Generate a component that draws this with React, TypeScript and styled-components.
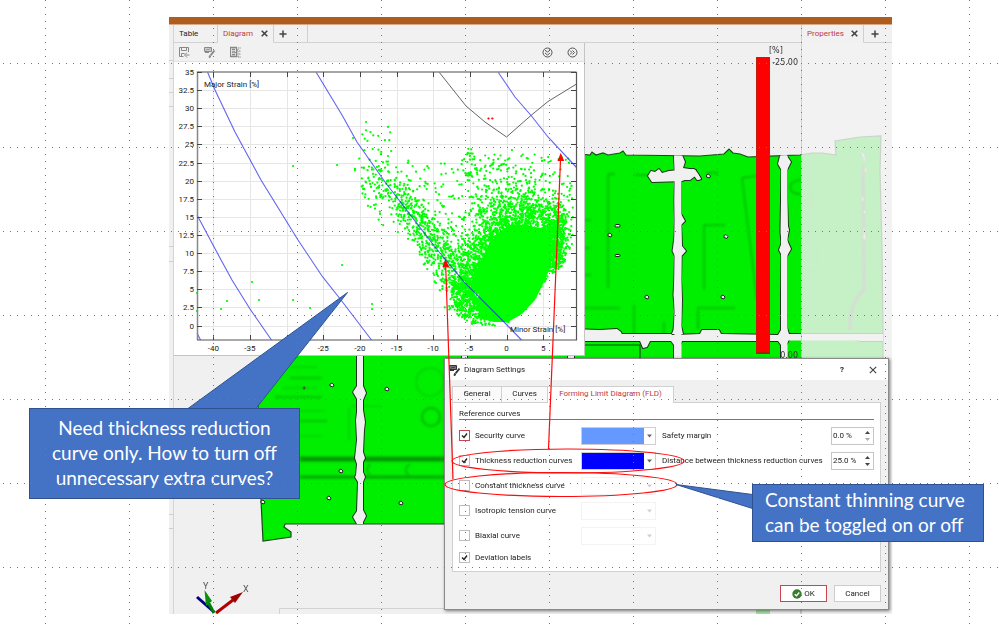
import React from "react";
import styled, { createGlobalStyle, css } from "styled-components";

const Global = createGlobalStyle`
  * { box-sizing: border-box; }
  body { margin: 0; background: #fff; }
  button, input, select { font: inherit; color: inherit; margin: 0; }
`;

const ui = `Roboto, "Open Sans", sans-serif`;

/* ---------- page ---------- */

const Slide = styled.main`
  position: relative;
  display: flex;
  min-height: 100vh;
  padding: 17px 107px 13px 169px;
  background: #fff;
  overflow: hidden;
  font-family: ${ui};
  font-size: 8px;
  color: #1c1c1c;
`;

const DotGrid = styled.div`
  position: absolute;
  inset: 0;
  z-index: 5;
  pointer-events: none;
  background-image: radial-gradient(circle at 45.5px 0.5px, #777 0 0.6px, transparent 0.9px),
    radial-gradient(circle at 3.5px 63.5px, #777 0 0.6px, transparent 0.9px);
  background-size: 84px 7px, 7px 84px;
`;

const AppWindow = styled.section`
  position: relative;
  flex: 1;
  display: flex;
  flex-direction: column;
  background: #f0f0f0;
`;

const TitleStrip = styled.header`
  height: 8px;
  background: #ae5d1e;
  border-bottom: 1px solid #dba987;
`;

const Body = styled.div`
  position: relative;
  flex: 1;
  display: flex;
`;

const SceneSvg = styled.svg`
  position: absolute;
  inset: 0;
  width: 100%;
  height: 100%;
`;

const Rail = styled.aside`
  position: relative;
  width: 5px;
  border-right: 1px solid #d4d4d4;
`;

const Workspace = styled.div`
  position: relative;
  flex: 1;
  display: flex;
  flex-direction: column;
  align-items: flex-start;
`;

const PropertiesDock = styled.aside`
  position: relative;
  width: 91px;
  background: rgba(242, 242, 242, 0.82);
  border-left: 1px solid #cfcfcf;
`;

const TabStrip = styled.nav`
  display: flex;
  align-self: stretch;
  height: 18px;
  background: #f1f1f1;
`;

const TabFill = styled.div`
  display: flex;
  flex: 1;
  padding-left: 7px;
  border-bottom: 1px solid #d2d2d2;
`;

const DockTab = styled.div<{ $active?: boolean; $w: number }>`
  display: flex;
  align-items: center;
  justify-content: space-between;
  width: ${(p) => p.$w}px;
  padding: 0 5px;
  border-right: 1px solid #cfcfcf;
  border-bottom: 1px solid ${(p) => (p.$active ? "transparent" : "#d2d2d2")};
  color: ${(p) => (p.$active ? "#c0393f" : "#1c1c1c")};
`;

const PlainButton = styled.button`
  display: flex;
  align-items: center;
  justify-content: center;
  padding: 0;
  border: 0;
  background: none;
  line-height: 12px;
`;

const DiagramPanel = styled.section`
  display: flex;
  flex-direction: column;
  width: 411px;
  background: #fff;
  border-right: 1px solid #c4c4c4;
  border-bottom: 1px solid #c4c4c4;
`;

const Toolbar = styled.div`
  display: flex;
  align-items: center;
  gap: 14px;
  height: 19px;
  padding: 0 6px 0 4px;
  background: #f1f1f1;
  border-bottom: 1px solid #e2e2e2;
`;

const Spring = styled.span`
  flex: 1;
`;

const Plot = styled.svg`
  display: block;
  width: 410px;
  height: 293px;
`;

const Legend = styled.div`
  position: absolute;
  top: 20px;
  right: 2px;
  display: grid;
  grid-template-columns: 14px 28px;
  column-gap: 1px;
  font-family: "DejaVu Sans", sans-serif;
  font-size: 8px;
  line-height: 12px;
  color: #333;
`;

const LegendUnit = styled.span`
  grid-column: 1 / 3;
  padding-left: 13px;
`;

const LegendBar = styled.div`
  height: 297px;
  background: #f00;
  border: 1px solid #c02010;
  border-bottom: 2px solid #a02000;
`;

const LegendScale = styled.div`
  display: flex;
  flex-direction: column;
  justify-content: space-between;
  align-items: flex-end;
  height: 305px;
  margin-right: 1px;
`;

/* ---------- dialog ---------- */

const Dialog = styled.section`
  position: absolute;
  right: 3px;
  bottom: 4px;
  z-index: 2;
  width: 445px;
  background: #f0f0f0;
  border: 1px solid #8a8a8a;
  box-shadow: 1px 1px 3px rgba(0, 0, 0, 0.5);
`;

const DialogTitle = styled.header`
  display: flex;
  align-items: center;
  gap: 3px;
  height: 21px;
  padding: 0 11px 0 4px;
  background: #fff;
`;

const DialogHeading = styled.h1`
  flex: 1;
  margin: 0;
  font-size: 8px;
  font-weight: 400;
`;

const TitleActions = styled.div`
  display: flex;
  gap: 25px;
`;

const DialogTabs = styled.div`
  display: flex;
  align-items: flex-end;
  height: 22px;
  padding: 0 7px;
`;

const DialogTab = styled.button<{ $active?: boolean; $w: number }>`
  width: ${(p) => p.$w}px;
  height: ${(p) => (p.$active ? 17 : 16)}px;
  padding: 0 0 2px;
  line-height: 12px;
  white-space: nowrap;
  border: 1px solid #d0d0d0;
  border-bottom: 0;
  border-right-width: ${(p) => (p.$active ? 1 : 0)}px;
  background: ${(p) => (p.$active ? "#fff" : "#fafafa")};
  color: ${(p) => (p.$active ? "#c0393f" : "#1c1c1c")};
  ${(p) =>
    p.$active &&
    css`
      position: relative;
      z-index: 1;
      margin-bottom: -1px;
    `}
`;

const TabPage = styled.div`
  height: 170px;
  margin: 0 7px;
  padding: 5px 6px 0;
  background: #fff;
  border: 1px solid #d0d0d0;
`;

const GroupTitle = styled.h2`
  margin: 0 0 3px;
  font-size: 8px;
  font-weight: 400;
  line-height: 11px;
  border-bottom: 1px solid #777;
`;

const CurveRow = styled.div<{ $short?: boolean }>`
  display: grid;
  grid-template-columns: 122px 75px 1fr 43px;
  align-items: center;
  height: ${(p) => (p.$short ? 19 : 25)}px;
`;

const CheckLabel = styled.label`
  display: flex;
  align-items: center;
  gap: 5px;
  white-space: nowrap;
`;

const CheckBox = styled.input<{ $accent?: boolean }>`
  appearance: none;
  flex: none;
  width: 11px;
  height: 11px;
  border: 1px solid ${(p) => (p.$accent ? "#c9474c" : "#bdbdbd")};
  background: #fff;
  &:checked {
    background-image: url("data:image/svg+xml,%3Csvg xmlns='http://www.w3.org/2000/svg' viewBox='0 0 9 9'%3E%3Cpath d='M2 4.5 4 6.5 7 2.5' fill='none' stroke='%23222' stroke-width='1.4'/%3E%3C/svg%3E");
  }
`;

const ColorSelect = styled.select<{ $color?: string }>`
  appearance: none;
  width: 75px;
  height: 18px;
  padding: 0;
  border: 1px solid ${(p) => (p.$color ? "#cfcfcf" : "#eeeeee")};
  color: transparent;
  background-color: #fff;
  background-image: url("data:image/svg+xml,%3Csvg xmlns='http://www.w3.org/2000/svg' viewBox='0 0 5 4'%3E%3Cpath d='M0 .5h5L2.500 3.500z' fill='%23${(p) =>
        p.$color ? "666" : "bbb"}'/%3E%3C/svg%3E"),
    linear-gradient(${(p) => p.$color || "#fff"}, ${(p) => p.$color || "#fff"});
  background-size: 5px 4px, 62px 100%;
  background-position: 65px 6px, 0 0;
  background-repeat: no-repeat;
`;

const FieldLabel = styled.label`
  padding-left: 6px;
  white-space: nowrap;
`;

const SpinBox = styled.span`
  display: flex;
  height: 18px;
  border: 1px solid #c6c6c6;
  background: #fff;
`;

const SpinInput = styled.input`
  flex: 1;
  min-width: 0;
  padding: 0 0 0 1px;
  border: 0;
  background: none;
`;

const SpinButtons = styled.span`
  display: flex;
  flex-direction: column;
  justify-content: center;
  gap: 4px;
  width: 11px;
`;

const DialogFooter = styled.footer`
  display: flex;
  justify-content: flex-end;
  gap: 7px;
  padding: 13px 7px 7px;
`;

const DialogButton = styled.button<{ $primary?: boolean }>`
  display: flex;
  align-items: center;
  justify-content: center;
  gap: 2px;
  width: 47px;
  height: 17px;
  padding: 0;
  background: #fff;
  border: 1px solid ${(p) => (p.$primary ? "#c9474c" : "#cccccc")};
`;

/* ---------- annotations ---------- */

const Annotations = styled.svg`
  position: absolute;
  top: 0;
  left: 0;
  z-index: 3;
  width: 999px;
  height: 627px;
  pointer-events: none;
`;

const Callout = styled.p<{ $x: number; $y: number; $w: number; $left?: boolean }>`
  position: absolute;
  z-index: 4;
  left: ${(p) => p.$x}px;
  top: ${(p) => p.$y}px;
  width: ${(p) => p.$w}px;
  margin: 0;
  padding: ${(p) => (p.$left ? "2px 0 4px 12px" : "6px 0 8px")};
  text-align: ${(p) => (p.$left ? "left" : "center")};
  font-family: Lato, sans-serif;
  font-size: 19px;
  line-height: 25px;
  color: #fff;
  background: #4472c4;
  border: 1px solid #2f528f;
`;

/* ---------- strain plot data ---------- */

function makeRandom(seed: number) {
  let s = seed;
  return () => {
    s = (s * 1664525 + 1013904223) % 4294967296;
    return s / 4294967296;
  };
}

type Pt = [number, number];

function interpolate(line: Pt[], x: number) {
  if (x <= line[0][0]) return line[0][1];
  for (let i = 1; i < line.length; i++) {
    const [x0, y0] = line[i - 1];
    const [x1, y1] = line[i];
    if (x <= x1) return y0 + ((x - x0) / (x1 - x0)) * (y1 - y0);
  }
  return line[line.length - 1][1];
}

const lowerEdge: Pt[] = [
  [350, 160], [372, 220], [400, 235], [430, 275], [445, 310], [470, 324], [495, 326], [508, 323],
  [520, 316], [535, 301], [543, 289], [548, 279], [555, 271], [563, 268], [567, 254], [574, 240],
];
const mainCurve: Pt[] = [
  [316, 72], [342, 115], [357, 142], [385, 182], [435, 247], [465, 283], [505, 323], [522, 340],
];

function makeScatter() {
  const rnd = makeRandom(77);
  const gauss = () => rnd() + rnd() + rnd() + rnd() - 2;
  const pts: Pt[] = [];
  const add = (x: number, y: number) => {
    if (x < 574 && x > 350 && y > 118 && y < interpolate(lowerEdge, x)) pts.push([x, y]);
  };
  for (let i = 0; i < 950; i++) {
    const x = 382 + 108 * Math.pow(rnd(), 0.7);
    add(x + gauss() * 10, interpolate(mainCurve, x) + gauss() * (18 + (x - 368) * 0.1));
  }
  for (let i = 0; i < 70; i++) add(372 + gauss() * 13, 185 + gauss() * 30);
  for (let i = 0; i < 500; i++) add(470 + gauss() * 16, 292 + gauss() * 26);
  for (let i = 0; i < 2300; i++) add(522 + gauss() * 40, 240 + gauss() * 42);
  for (let i = 0; i < 1300; i++) add(495 + gauss() * 27, 274 + gauss() * 42);
  for (let i = 0; i < 450; i++) add(556 + gauss() * 9, 240 + gauss() * 30);
  for (let i = 0; i < 360; i++) {
    const x = 395 + 179 * rnd();
    const y = 285 - 128 * Math.pow(rnd(), 0.8);
    if (y < interpolate(mainCurve, x) + 10) add(x, y);
  }
  for (let i = 0; i < 50; i++) add(468 + 75 * rnd(), 148 + 55 * rnd());
  for (let i = 0; i < 24; i++) add(470 + gauss() * 8, 148 + 30 * rnd());
  for (let i = 0; i < 22; i++) add(354 + 40 * rnd(), 122 + 50 * rnd());
  const lone: Pt[] = [
    [293, 166], [337, 165], [197, 293], [197, 311], [221, 309], [227, 301], [252, 282], [259, 300],
    [293, 300], [310, 308], [342, 265], [372, 304], [372, 309], [366, 122], [353, 138],
  ];
  return [...pts, ...lone].map(([x, y]) => `M${x.toFixed(1)} ${y.toFixed(1)}h.1`).join("");
}

const scatterPath = makeScatter();

const yTicks = [35, 32.5, 30, 27.5, 25, 22.5, 20, 17.5, 15, 12.5, 10, 7.5, 5, 2.5, 0];
const xTicks = [-40, -35, -30, -25, -20, -15, -10, -5, 0, 5];
const px = (v: number) => 506.5 + v * 7.33;
const py = (v: number) => 325.5 - v * 7.243;

const reductionCurves = [
  "M207.500 72 215 90 235 132 261 180 298 240 322 276 341 300 371.500 340",
  "M197 215 220 258 232 280 250 309 271.500 340",
  "M197 333 200.500 340",
  "M316 72 342 115 357 142 385 182 435 247 465 283 505 323 521.500 340",
  "M498 72 515 97 531.500 116 548 137 576.500 167.500",
];

function StrainPlot() {
  return (
    <Plot viewBox="174 62 410 293" role="img" aria-label="Forming limit diagram">
      <rect x="197.500" y="72.500" width="379" height="267" fill="#fff" />
      <g stroke="#e6e6e6">
        {yTicks.slice(1).map((v) => (
          <path key={v} d={`M198 ${Math.round(py(v)) + 0.5}H576`} />
        ))}
        {xTicks.map((v) => (
          <path key={v} d={`M${Math.round(px(v)) + 0.5} 73V340`} />
        ))}
      </g>
      <path d="M439 72 466 106 485 122 506.500 137 531.500 115 548 101.500 576.500 84" fill="none" stroke="#666" />
      <path d={scatterPath} stroke="#00ff00" strokeWidth="2.200" strokeLinecap="round" fill="none" />
      <path
        d="M477 318 482 302 474 284 479 264 487 248 498 233 512 224 530 226 545 229 551 245 551 266 544 282 535 300 522 314 508 322 494 322Z"
        fill="#00ff00"
      />
      <path d="M488.500 118.500h.1M492.300 118.500h.1" stroke="#f00" strokeWidth="2.200" strokeLinecap="round" />
      <g fill="none" stroke="#2222f0" strokeWidth="1.100" strokeOpacity="0.700">
        {reductionCurves.map((d) => (
          <path key={d} d={d} />
        ))}
      </g>
      <path d="M197.500 340V72H576.500" fill="none" stroke="#888" strokeWidth="1.500" />
      <path d="M197 340H576.500V72" fill="none" stroke="#555" strokeWidth="1.200" />
      <g stroke="#444">
        {yTicks.map((v) => (
          <path key={v} d={`M197 ${Math.round(py(v)) + 0.5}h5M571 ${Math.round(py(v)) + 0.5}h5`} />
        ))}
        {xTicks.map((v) => (
          <path key={v} d={`M${Math.round(px(v)) + 0.5} 72v5M${Math.round(px(v)) + 0.5} 340v-5`} />
        ))}
      </g>
      <g fontFamily={ui} fontSize="8" fill="#1c1c1c">
        {yTicks.map((v) => (
          <text key={v} x="194" y={py(v) + 3} textAnchor="end">
            {v}
          </text>
        ))}
        {xTicks
          .filter((v) => v !== -30)
          .map((v) => (
            <text key={v} x={px(v)} y="351" textAnchor="middle">
              {v}
            </text>
          ))}
        <text x="204" y="87">Major Strain [%]</text>
        <text x="510" y="332">Minor Strain [%]</text>
      </g>
    </Plot>
  );
}

/* ---------- simulated sheet part ---------- */

const sheetRight =
  "M580 154 590 155 592 152 596 155 603 153 608 155 620 153 623 151 626 155 700 156 724 154 729 149 733 153 740 154 748 157 800 155 812 153 822 153 836 155 835 141 860 137 881 136 880 170 882 250 883 334 883 420H580Z";
const sheetLeft =
  "M300 345 258 405 261 500 263 541 291 537 291 532 284 527 285 524 357 524 400 524 460 524H640V345Z";

const gapShapes = [
  "M673 140 674 158 675 170 675 184 674.500 200 675 220 674.500 236 673 248 672.500 251 675 256 674.500 275 673.500 295 675 312 673.500 330 671 336H570V329L600 330 617 329 621 332 622 335 672 335 700 334 702 330 719 330 721 334 778 335 781 330 781 295 781.500 255 779 250 781.500 243 780.500 232 781 200 781.500 170 778 164 780 156 779 140H788L787 156 791 162 787 170 787 200 788 226 789 230 787 240 791 249 787 256 787 300 787 328 789 334H894V341H860L852 338H790L786 345V430H781V345L778 341 682 341 680 345V430H674V345L671 341 650 341 647 347 643 348 640 341H570V334L683 334 681 326 682 300 681 280 681.500 256 686 251 682 246 681 225 685 221 681 214 681 180 690 180 698 174 701 179 698 180 694 173 696 170 683 168 685 162 682 155 683 140Z",
  "M648 176 651 171 655 172 659 169 662 173 669 171 694 169 697 172 701 179 697 180 693 174 690 178 682 181 652 182Z",
  "M357 330V386L353 392 357 399V412L356 420 357 440 355 458 357 464 356 475 355 477 358 482 357 511 353 517 357 524 357 540H363L363 522 366 516 363 510V482L365 477 363 472V462L365 458 363 452 364 430 365 422 363 410V400L366 393 363 386V330Z",
  "M462 330h5v30h-5zM568 330h6v30h-6z",
];

const holes: Pt[] = [[708.5, 176], [610, 235], [726, 236.5], [647, 297], [723, 297], [332, 385], [387, 389], [341, 471], [329, 498], [401, 503], [263, 502]];

function Scene() {
  return (
    <SceneSvg viewBox="169 25 723 589" preserveAspectRatio="xMinYMin meet" aria-hidden="true">
      <defs>
        <filter id="soft" x="-20%" y="-20%" width="140%" height="140%">
          <feGaussianBlur stdDeviation="1.200" />
        </filter>
        <clipPath id="sheet">
          <path d={sheetRight} />
          <path d={sheetLeft} />
        </clipPath>
      </defs>
      <g fill="#00ee00" stroke="#174a17" strokeWidth="1.200">
        <path d={sheetRight} />
        <path d={sheetLeft} />
      </g>
      <g filter="url(#soft)" fill="none" stroke="#009c00" strokeWidth="1.500">
        <g opacity="0.650">
          <path d="M608 174V288M608 174H615M635 175H665M704 225H725M704 225V290M742 178 757 300M742 178 760 175M584 308H620M634 305V335M664 322V335M697 308H735M698 310V330M706 173H718M584 220h7M584 248h6M584 275h7M802 180q-11 0-12 7 0 7 12 7" />
          <path d="M290 378H322M275 397H322M300 421H327" />
          <circle cx="431" cy="417" r="9" strokeWidth="2" />
        </g>
        <g opacity="0.300">
          <path d="M290 367H317M282 388H317M300 411H325M300 436H323M349 408V440M352 406H380" />
          <circle cx="430" cy="382" r="14" />
          <path d="M812 175V240q10 10 4 24M803 200h24M803 270h20" />
        </g>
        <path d="M300 459H446" strokeWidth="5" />
        <path d="M300 477H446" strokeWidth="3" opacity="0.850" />
        <path d="M370 464q-6 6 0 11M410 464q-8 5-1 12" strokeWidth="2" opacity="0.500" />
        <path d="M863 165 864 290Q850 300 850 330" strokeWidth="3" stroke="#607060" />
      </g>
      <g clipPath="url(#sheet)">
        <g stroke="#1d331d" strokeWidth="2" strokeLinejoin="round">
          {gapShapes.map((d) => (
            <path key={d} d={d} fill="#f0f0f0" />
          ))}
        </g>
        <g fill="#f0f0f0">
          {gapShapes.map((d) => (
            <path key={d} d={d} />
          ))}
          <path d="M674.500 130H681.500V430H674.500ZM781 130H787.500V430H781ZM570 335.500H894V340.500H570Z" />
        </g>
      </g>
      <g fill="#f0f0f0" stroke="#222">
        {holes.map(([x, y]) => (
          <path key={`${x}-${y}`} d={`M${x - 2} ${y - 1}l2-1 2 2-1 2-3-1z`} />
        ))}
        <rect x="615" y="224.500" width="5" height="2.500" rx="1" />
        <rect x="615" y="254.500" width="5" height="2" rx="1" />
        <circle cx="304" cy="388" r="1" />
      </g>
      <path d="M861 152q5 1 4 10l-2-5zM865 167l2 3-2 2zM862 196l2 3-2 3zM864 210l2 2-2 2zM864 228l2 12-3-2z" fill="#f0f0f0" stroke="#999" />
      <path d="M279.500 614V608.500H892" fill="none" stroke="#d2d2d2" />
      <rect x="756" y="600" width="14" height="14" fill="#a8dfa8" />
      <path d="M800.500 600V614" stroke="#ccc" />
      <g strokeWidth="3">
        <path d="M197 597 214 612" stroke="#000080" />
        <path d="M214 613 207 600" stroke="#008000" />
        <path d="M216 613 233 600" stroke="#b00000" />
      </g>
      <path d="M204.500 590 212 601 206 606Z" fill="#0a900a" />
      <path d="M243 592 235 603 230 597Z" fill="#a00000" />
      <g fontFamily={ui} fontSize="9" fill="#555">
        <text x="203" y="589">Y</text>
        <text x="243" y="592">X</text>
      </g>
      <path d="M169 60.500h4M169 78.500h4M169 92.500h4M169 106.500h4M169 246.500h4M169 261.500h4M169 514.500h4M169 528.500h4" stroke="#d0d0d0" />
    </SceneSvg>
  );
}

/* ---------- small icons ---------- */

const CloseIcon = ({ size = 7, width = 1.6 }: { size?: number; width?: number }) => (
  <svg width={size} height={size} viewBox="0 0 7 7" stroke="#444" strokeWidth={width} fill="none">
    <path d="M.7.7 6.300 6.300M6.300.7.7 6.300" />
  </svg>
);

const PlusIcon = () => (
  <svg width="8" height="8" viewBox="0 0 8 8" stroke="#444" strokeWidth="1.500">
    <path d="M4 .5v7M.5 4h7" />
  </svg>
);

const SaveIcon = () => (
  <svg width="12" height="12" viewBox="0 0 12 12" fill="none" stroke="#888">
    <path d="M5.500 10.500h-4v-9h9V6M3.500 1.500v3h5v-3M3.500 10V7.500h3M11.500 9h-4M9 6.500 6.500 9 9 11.500" />
  </svg>
);

const EditDiagramIcon = ({ dark }: { dark?: boolean }) => (
  <svg width="12" height="12" viewBox="0 0 12 12" fill="none" stroke={dark ? "#333" : "#888"}>
    <path d="M.5 1.500h7v4h-7z" fill={dark ? "#777" : "#ccc"} />
    <path d="M2 4.500l1.500-1.500 1 1 1.500-1.500M1 6.500h4" />
    <path d="M10.500 4.500 6.500 9.500" strokeWidth="2" />
    <path d="M5 11.500l.5-2 1.500 1.200z" fill={dark ? "#333" : "#888"} />
  </svg>
);

const ListIcon = () => (
  <svg width="12" height="12" viewBox="0 0 12 12" fill="none" stroke="#888">
    <path d="M.5 1.500h6v9h-6zM2 3.500h3M2 6h3M2 8.500h3" strokeWidth="1.300" />
    <path d="M4 9 8 3v8M8 2h3M9 5h2M9 8h2M8 11h3" strokeDasharray="1.500 .8" />
  </svg>
);

const CircleChevrons = ({ down }: { down?: boolean }) => (
  <svg width="11" height="11" viewBox="0 0 11 11" fill="none" stroke="#555">
    <circle cx="5.500" cy="5.500" r="4.500" />
    {down ? <path d="M3 3.200 5.500 5l2.500-1.800M3 6 5.500 8l2.500-2" /> : <path d="M3 3.500 5 5.500l-2 2M5.500 3.500l2 2-2 2" />}
  </svg>
);

const OkIcon = () => (
  <svg width="10" height="10" viewBox="0 0 10 10">
    <circle cx="5" cy="5" r="4.700" fill="#3a7d2c" />
    <path d="M2.700 5.200 4.400 6.800 7.300 3.500" fill="none" stroke="#fff" strokeWidth="1.300" />
  </svg>
);

const SpinArrow = ({ up, muted }: { up?: boolean; muted?: boolean }) => (
  <svg width="5" height="3" viewBox="0 0 5 3">
    <path d={up ? "M0 3 2.500 0 5 3z" : "M0 0 2.500 3 5 0z"} fill={muted ? "#aaa" : "#444"} />
  </svg>
);

/* ---------- dialog content ---------- */

type Curve = {
  id: string;
  label: string;
  checked?: boolean;
  accent?: boolean;
  select?: boolean;
  color?: string;
  field?: string;
  value?: string;
};

const curves: Curve[] = [
  { id: "security", label: "Security curve", checked: true, accent: true, select: true, color: "#6699ff", field: "Safety margin", value: "0.0 %" },
  { id: "thickness", label: "Thickness reduction curves", checked: true, select: true, color: "#0000ff", field: "Distance between thickness reduction curves", value: "25.0 %" },
  { id: "constant", label: "Constant thickness curve", select: true },
  { id: "isotropic", label: "Isotropic tension curve", select: true },
  { id: "biaxial", label: "Biaxial curve", select: true },
  { id: "deviation", label: "Deviation labels", checked: true },
];

function SettingsDialog() {
  return (
    <Dialog role="dialog" aria-labelledby="dialog-title">
      <DialogTitle>
        <EditDiagramIcon dark />
        <DialogHeading id="dialog-title">Diagram Settings</DialogHeading>
        <TitleActions>
          <PlainButton aria-label="Help"><b>?</b></PlainButton>
          <PlainButton aria-label="Close"><CloseIcon size={8} width={1} /></PlainButton>
        </TitleActions>
      </DialogTitle>
      <DialogTabs role="tablist">
        <DialogTab role="tab" $w={49}>General</DialogTab>
        <DialogTab role="tab" $w={46}>Curves</DialogTab>
        <DialogTab role="tab" aria-selected $active $w={127}>Forming Limit Diagram (FLD)</DialogTab>
      </DialogTabs>
      <TabPage role="tabpanel">
        <GroupTitle>Reference curves</GroupTitle>
        {curves.map((c) => (
          <CurveRow key={c.id} $short={!c.select}>
            <CheckLabel>
              <CheckBox type="checkbox" defaultChecked={c.checked} $accent={c.accent} />
              {c.label}
            </CheckLabel>
            {c.select && (
              <ColorSelect $color={c.color} disabled={!c.color} aria-label={`${c.label} color`} />
            )}
            {c.field && <FieldLabel htmlFor={c.id}>{c.field}</FieldLabel>}
            {c.field && (
              <SpinBox>
                <SpinInput id={c.id} type="text" defaultValue={c.value} />
                <SpinButtons>
                  <PlainButton aria-label="Increase"><SpinArrow up /></PlainButton>
                  <PlainButton aria-label="Decrease"><SpinArrow muted={c.id === "security"} /></PlainButton>
                </SpinButtons>
              </SpinBox>
            )}
          </CurveRow>
        ))}
      </TabPage>
      <DialogFooter>
        <DialogButton $primary><OkIcon />OK</DialogButton>
        <DialogButton>Cancel</DialogButton>
      </DialogFooter>
    </Dialog>
  );
}

export default function App() {
  return (
    <Slide>
      <Global />
      <AppWindow>
        <TitleStrip />
        <Body>
          <Scene />
          <Rail />
          <Workspace>
            <TabStrip>
              <DockTab $w={44}><PlainButton>Table</PlainButton></DockTab>
              <DockTab $active $w={56}>
                <PlainButton>Diagram</PlainButton>
                <PlainButton aria-label="Close Diagram"><CloseIcon /></PlainButton>
              </DockTab>
              <DockTab $w={34}>
                <PlainButton aria-label="Add tab"><PlusIcon /></PlainButton>
              </DockTab>
              <TabFill />
            </TabStrip>
            <DiagramPanel>
              <Toolbar>
                <PlainButton aria-label="Save"><SaveIcon /></PlainButton>
                <PlainButton aria-label="Edit diagram"><EditDiagramIcon /></PlainButton>
                <PlainButton aria-label="Labels"><ListIcon /></PlainButton>
                <Spring />
                <PlainButton aria-label="Collapse"><CircleChevrons down /></PlainButton>
                <PlainButton aria-label="More"><CircleChevrons /></PlainButton>
              </Toolbar>
              <StrainPlot />
            </DiagramPanel>
            <Legend>
              <LegendUnit>[%]</LegendUnit>
              <LegendBar />
              <LegendScale>
                <span>-25.00</span>
                <span>0.00</span>
              </LegendScale>
            </Legend>
          </Workspace>
          <PropertiesDock>
            <TabStrip>
              <DockTab $active $w={62}>
                <PlainButton>Properties</PlainButton>
                <PlainButton aria-label="Close Properties"><CloseIcon /></PlainButton>
              </DockTab>
              <TabFill>
                <PlainButton aria-label="Add panel"><PlusIcon /></PlainButton>
              </TabFill>
            </TabStrip>
          </PropertiesDock>
        </Body>
        <SettingsDialog />
      </AppWindow>

      <Annotations aria-hidden="true">
        <g fill="none" stroke="#ff0a0a" strokeWidth="1.200">
          <ellipse cx="568" cy="461" rx="116" ry="12" />
          <ellipse cx="561" cy="484.500" rx="116" ry="12" />
          <path d="M453 479 445.700 266M548.500 449 560.500 160" />
        </g>
        <path d="M445.500 259 449 267H442.500ZM560.700 153 564.200 161H557.500Z" fill="#f00" />
        <g fill="#4472c4" stroke="#2f528f">
          <path d="M188 408.500 347.500 292.500 256 408.500" />
          <path d="M752.500 494.500 676 484.500 752.500 508.500" />
        </g>
      </Annotations>
      <Callout $x={29} $y={408} $w={271}>
        Need thickness reduction<br />curve only. How to turn off<br />unnecessary extra curves?
      </Callout>
      <Callout $x={752} $y={484} $w={232} $left>
        Constant thinning curve<br />can be toggled on or off
      </Callout>
      <DotGrid />
    </Slide>
  );
}
